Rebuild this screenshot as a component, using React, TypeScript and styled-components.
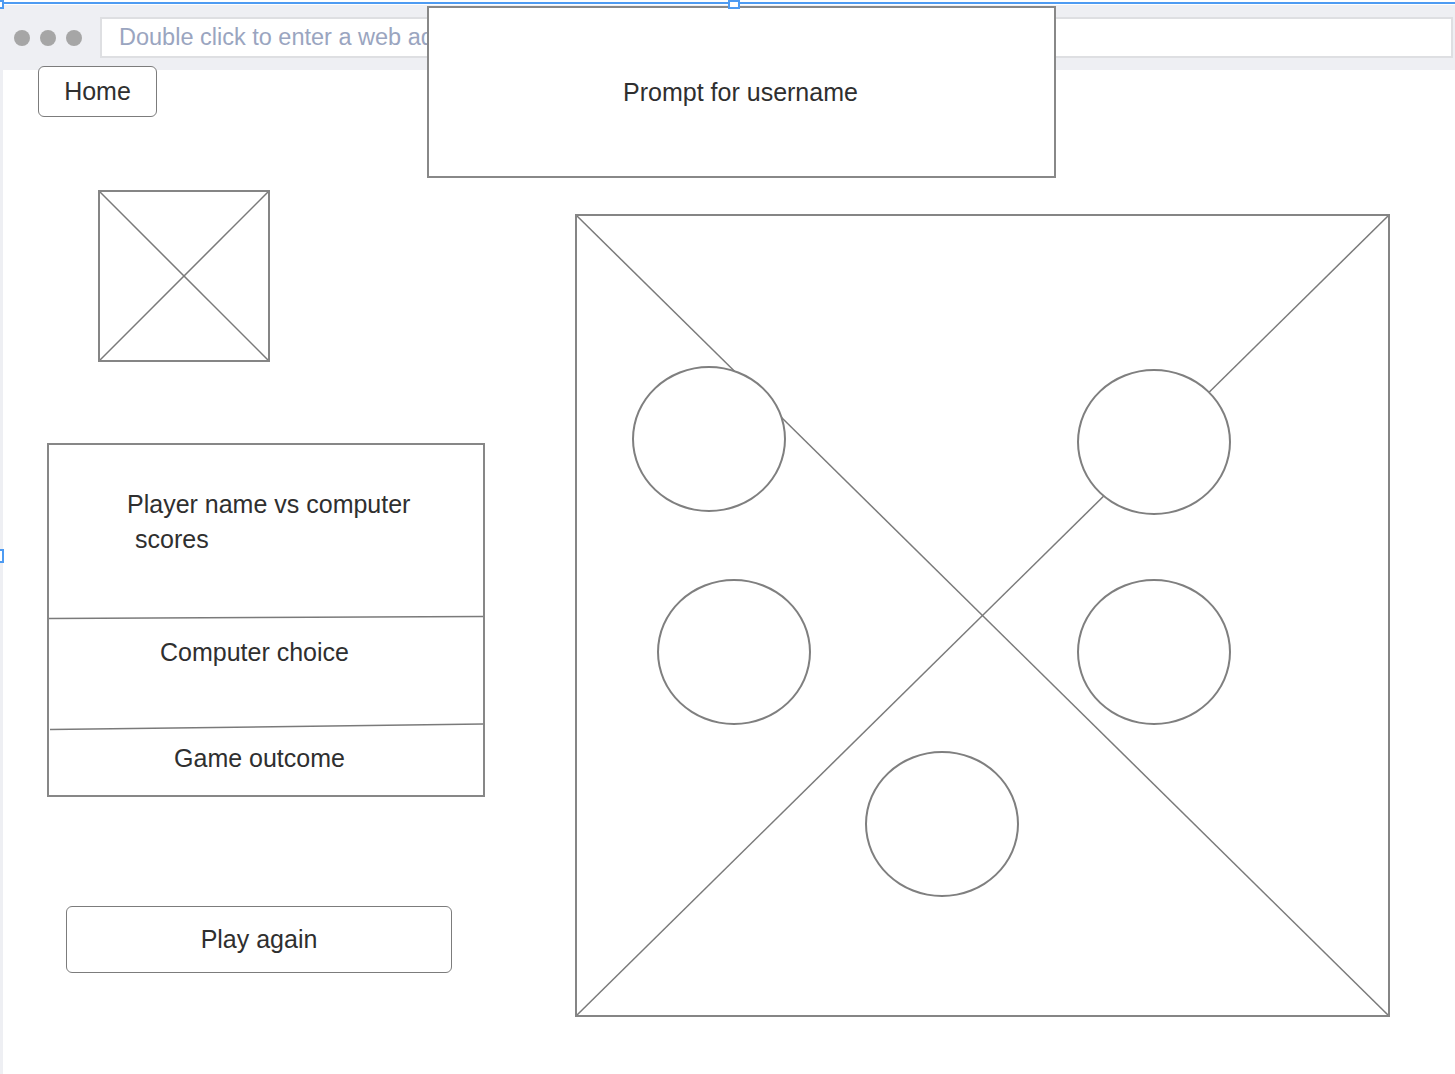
import React from "react";
import styled, { createGlobalStyle } from "styled-components";

const Global = createGlobalStyle`
  html, body { margin: 0; padding: 0; background: #ffffff; }
  body { font-family: "Liberation Sans", Arial, sans-serif; color: #2f2f2f; }
  * { box-sizing: border-box; }
`;

const Canvas = styled.div`
  position: relative;
  width: 1455px;
  height: 1074px;
  overflow: hidden;
  background: #ffffff;
`;

const Window = styled.div`
  display: flex;
  flex-direction: column;
  height: 100%;
  padding-top: 5px;
`;

const Chrome = styled.div`
  display: flex;
  align-items: center;
  height: 65px;
  padding: 0 2px 0 14px;
  background: #eeeff3;
`;

const Dots = styled.div`
  display: flex;
  gap: 10px;
`;

const Dot = styled.span`
  width: 16px;
  height: 16px;
  border-radius: 50%;
  background: #a6a6a6;
`;

const AddressBar = styled.div`
  flex: 1;
  height: 41px;
  margin-left: 18px;
  display: flex;
  align-items: center;
  padding-left: 17px;
  background: #ffffff;
  border: 2px solid #dedfe2;
  font-size: 23.5px;
  color: #9aa5c0;
  white-space: nowrap;
  overflow: hidden;
`;

const Body = styled.div`
  flex: 1;
  display: grid;
  grid-template-columns: 572px 815px;
  align-items: start;
  border-left: 3px solid #eeeff3;
`;

const LeftColumn = styled.div`
  display: flex;
  flex-direction: column;
  align-items: flex-start;
`;

const Button = styled.div<{ $w: number; $h: number; $ml: number; $mt: number }>`
  width: ${(p) => p.$w}px;
  height: ${(p) => p.$h}px;
  margin-left: ${(p) => p.$ml}px;
  margin-top: ${(p) => p.$mt}px;
  display: flex;
  align-items: center;
  justify-content: center;
  background: #ffffff;
  border: 1.5px solid #7c7c7c;
  border-radius: 6px;
  font-size: 25px;
  color: #2f2f2f;
  position: relative;
`;

const Placeholder = styled.div<{ $w: number; $h: number; $ml?: number; $mt: number }>`
  position: relative;
  width: ${(p) => p.$w}px;
  height: ${(p) => p.$h}px;
  margin-left: ${(p) => p.$ml ?? 0}px;
  margin-top: ${(p) => p.$mt}px;
  border: 2px solid #858585;
  background: #ffffff;
`;

const CrossSvg = styled.svg`
  display: block;
  width: 100%;
  height: 100%;
`;

const Cross = () => (
  <CrossSvg viewBox="0 0 100 100" preserveAspectRatio="none">
    <line x1="0" y1="0" x2="100" y2="100" stroke="#7a7a7a" strokeWidth="1.5" vectorEffect="non-scaling-stroke" />
    <line x1="100" y1="0" x2="0" y2="100" stroke="#7a7a7a" strokeWidth="1.5" vectorEffect="non-scaling-stroke" />
  </CrossSvg>
);

const Ellipse = styled.div<{ $x: number; $y: number }>`
  position: absolute;
  left: ${(p) => p.$x}px;
  top: ${(p) => p.$y}px;
  width: 154px;
  height: 146px;
  border-radius: 50%;
  border: 2px solid #7f7f7f;
  background: #ffffff;
`;

const Panel = styled.div`
  width: 438px;
  height: 354px;
  margin-left: 44px;
  margin-top: 81px;
  display: flex;
  flex-direction: column;
  border: 2px solid #878787;
  font-size: 25px;
  line-height: 35px;
`;

const Section = styled.div<{ $h?: number; $pt: number; $pl?: number; $pr?: number; $center?: boolean }>`
  ${(p) => (p.$h ? `height: ${p.$h}px;` : "flex: 1;")}
  padding-top: ${(p) => p.$pt}px;
  padding-left: ${(p) => p.$pl ?? 0}px;
  padding-right: ${(p) => p.$pr ?? 0}px;
  text-align: ${(p) => (p.$center ? "center" : "left")};
  white-space: nowrap;
`;

const IndentLine = styled.div`
  padding-left: 8px;
`;

const DividerSvg = styled.svg<{ $h: number }>`
  display: block;
  width: 434px;
  height: ${(p) => p.$h}px;
  flex: none;
`;

const Divider = ({ h, x1, y1, y2 }: { h: number; x1: number; y1: number; y2: number }) => (
  <DividerSvg $h={h} viewBox={`0 0 434 ${h}`}>
    <line x1={x1} y1={y1} x2={434} y2={y2} stroke="#7a7a7a" strokeWidth="1.5" />
  </DividerSvg>
);

const RightColumn = styled.div`
  margin-top: 144px;
`;

const Prompt = styled.div`
  position: absolute;
  left: 427px;
  top: 6px;
  width: 629px;
  height: 172px;
  display: flex;
  align-items: center;
  justify-content: center;
  background: #ffffff;
  border: 2px solid #888888;
  font-size: 25px;
  color: #2f2f2f;
  padding-right: 2px;
`;

const SelectionLine = styled.div`
  position: absolute;
  left: 0;
  top: 2px;
  width: 100%;
  height: 2px;
  background: #4e9bf2;
`;

const Handle = styled.div<{ $x: number; $y: number; $w: number; $h: number }>`
  position: absolute;
  left: ${(p) => p.$x}px;
  top: ${(p) => p.$y}px;
  width: ${(p) => p.$w}px;
  height: ${(p) => p.$h}px;
  border: 2px solid #4e9bf2;
  background: #ffffff;
`;

const circles = [
  { x: 55, y: 150 },
  { x: 500, y: 153 },
  { x: 80, y: 363 },
  { x: 500, y: 363 },
  { x: 288, y: 535 },
];

export default function App() {
  return (
    <>
      <Global />
      <Canvas>
        <Window>
          <Chrome>
            <Dots>
              <Dot />
              <Dot />
              <Dot />
            </Dots>
            <AddressBar>Double click to enter a web address</AddressBar>
          </Chrome>
          <Body>
            <LeftColumn>
              <Button $w={119} $h={51} $ml={35} $mt={-4}>Home</Button>
              <Placeholder $w={172} $h={172} $ml={95} $mt={73}>
                <Cross />
              </Placeholder>
              <Panel>
                <Section $h={169} $pt={42} $pl={78}>
                  Player name vs computer
                  <IndentLine>scores</IndentLine>
                </Section>
                <Divider h={6} x1={0} y1={4.5} y2={2.5} />
                <Section $h={101} $pt={15} $pr={23} $center>
                  Computer choice
                </Section>
                <Divider h={12} x1={1} y1={8.5} y2={3} />
                <Section $pt={8} $pr={13} $center>
                  Game outcome
                </Section>
              </Panel>
              <Button $w={386} $h={67} $ml={63} $mt={109}>Play again</Button>
            </LeftColumn>
            <RightColumn>
              <Placeholder $w={815} $h={803} $mt={0}>
                <Cross />
                {circles.map((c, i) => (
                  <Ellipse key={i} $x={c.x} $y={c.y} />
                ))}
              </Placeholder>
            </RightColumn>
          </Body>
        </Window>
        <Prompt>Prompt for username</Prompt>
        <SelectionLine />
        <Handle $x={-6} $y={0} $w={10} $h={9} />
        <Handle $x={728} $y={0} $w={12} $h={9} />
        <Handle $x={-6} $y={549} $w={10} $h={14} />
      </Canvas>
    </>
  );
}
